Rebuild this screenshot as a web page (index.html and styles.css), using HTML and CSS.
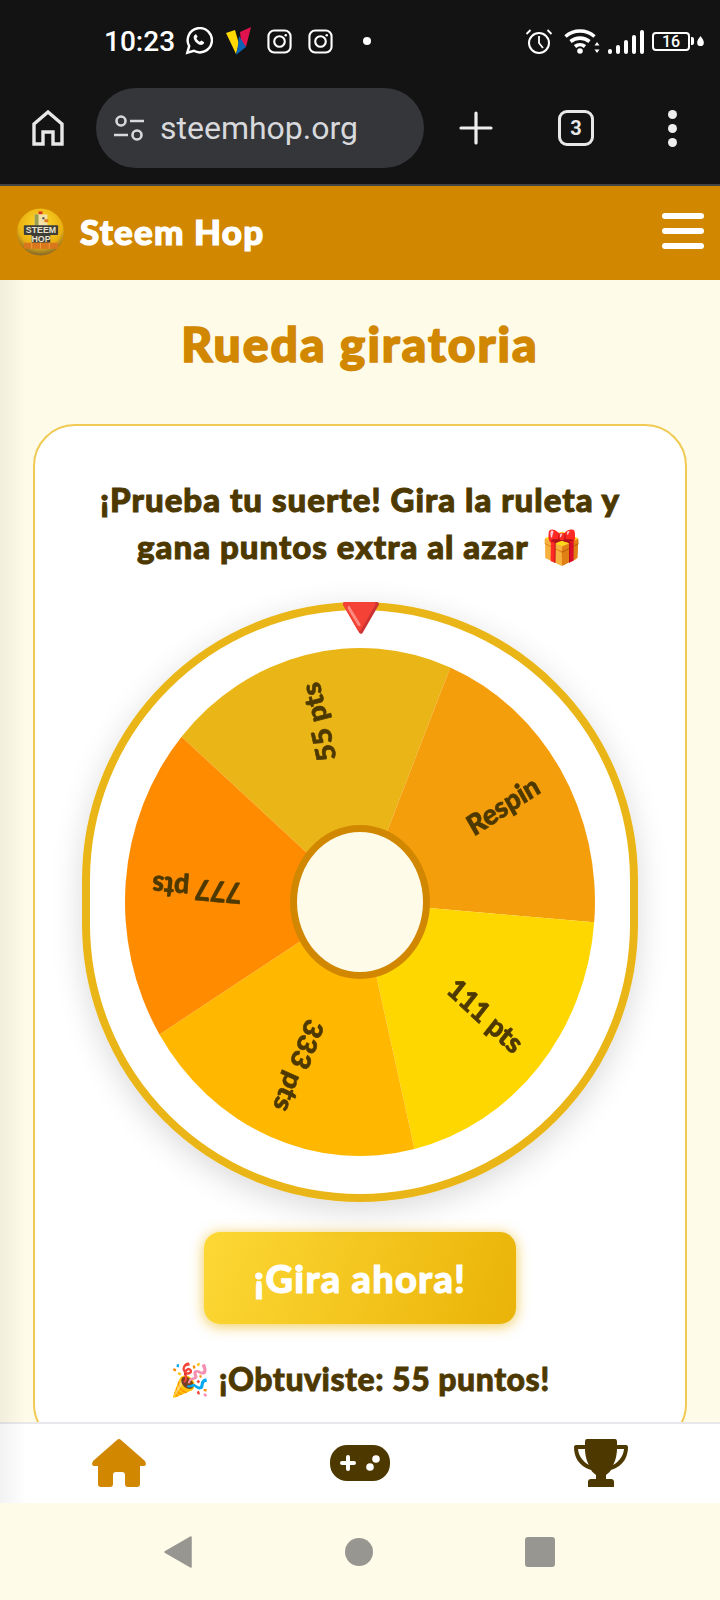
FILE: index.html
```html
<!DOCTYPE html>
<html lang="es">
<head>
    <meta charset="UTF-8">
    <title>Steem Hop</title>
    <link rel="stylesheet" href="styles.css">
</head>
<body>
    <div class="browser">
        <div class="status-bar">
            <span class="clock">10:23</span>
            <svg width="28" height="28" viewBox="0 0 30 30" fill="none" stroke="#fff" stroke-width="2.6"><path d="M2.500 27.500l2-7A13 13 0 1 1 9.500 25.500z"/><path d="M10.500 8.500c-2 1.500-1.500 5 1.500 8s6.500 3.500 8 1.500c.6-.8.6-1.600.2-2l-2.700-1.500-1.500 1.300c-1.800-.8-3-2-3.800-3.800l1.300-1.500-1.400-2.500c-.5-.4-1.200-.2-1.600.5z" fill="#fff" stroke="none"/></svg>
            <svg width="25" height="28" viewBox="0 0 25 28"><path d="M0 6l9-3 4 14-3 10z" fill="#ffd800"/><path d="M14 5l11-5-5 20-5-5z" fill="#e0134f"/><path d="M13 9l7 11-10 8 2-10z" fill="#0a63b5"/></svg>
            <svg class="insta" width="25" height="25" viewBox="0 0 26 26" fill="none" stroke="#fff" stroke-width="2.2"><rect x="1.500" y="1.500" width="23" height="23" rx="6"/><circle cx="13" cy="13" r="5.500"/><circle cx="19.500" cy="6.500" r="1.300" fill="#fff" stroke="none"/></svg>
            <svg class="insta" width="25" height="25" viewBox="0 0 26 26" fill="none" stroke="#fff" stroke-width="2.2"><rect x="1.500" y="1.500" width="23" height="23" rx="6"/><circle cx="13" cy="13" r="5.500"/><circle cx="19.500" cy="6.500" r="1.300" fill="#fff" stroke="none"/></svg>
            <span class="st-dot"></span>
            <div class="st-right">
                <svg class="alarm" width="28" height="26" viewBox="0 0 28 26" fill="none" stroke="#fff" stroke-width="2"><circle cx="14" cy="15" r="10"/><path d="M14 8v7l4 5M1.500 6l4-4M26.500 6l-4-4" stroke-width="1.800"/></svg>
                <svg width="36" height="26" viewBox="0 0 36 26" fill="none" stroke="#fff" stroke-width="3.600"><path d="M1.500 8.500a22 22 0 0 1 29 0M6.500 13.500a15 15 0 0 1 19 0M11 18.500a8 8 0 0 1 10 0"/><circle cx="16" cy="23" r="2.800" fill="#fff" stroke="none"/><path d="M33 14l2.500 3.500h-5zM33 25l2.500-3.500h-5z" fill="#fff" stroke="none"/></svg>
                <div class="bars"><i class="b1"></i><i class="b2"></i><i class="b3"></i><i class="b4"></i><i class="b5"></i></div>
                <div class="battery"><span>16</span></div>
                <span class="battery-tip"></span>
                <svg class="drop" width="7" height="10" viewBox="0 0 8 12"><path d="M4 0c2 3 4 5 4 8a4 4 0 0 1-8 0c0-3 2-5 4-8z" fill="#fff"/></svg>
            </div>
        </div>
        <div class="toolbar">
            <svg width="32" height="36" viewBox="0 0 32 36" fill="none" stroke="#e8e8e8" stroke-width="3.400"><path d="M2 34V14L16 2l14 12v20H21V22H11v12z"/></svg>
            <div class="address">
                <svg width="32" height="28" viewBox="0 0 32 28" fill="none" stroke="#d8d9dc" stroke-width="2.600"><circle cx="8" cy="7" r="4.500"/><path d="M17 7h14M1 21h14"/><circle cx="24" cy="21" r="4.500"/></svg>
                <span>steemhop.org</span>
            </div>
            <svg class="tb-plus" width="34" height="34" viewBox="0 0 34 34" stroke="#eee" stroke-width="3.200" stroke-linecap="round"><path d="M17 2v30M2 17h30"/></svg>
            <div class="tabs">3</div>
            <div class="dots"><i></i><i></i><i></i></div>
        </div>
    </div>

    <header class="site-header">
        <svg class="logo" width="47" height="48" viewBox="0 0 48 48">
            <defs>
                <radialGradient id="logoBg" cx="50%" cy="35%" r="65%">
                    <stop offset="0" stop-color="#ffdc2e"/>
                    <stop offset=".72" stop-color="#eab010"/>
                    <stop offset="1" stop-color="#80672a"/>
                </radialGradient>
            </defs>
            <circle cx="24" cy="24" r="24" fill="url(#logoBg)"/>
            <rect x="22" y="3" width="4" height="3" fill="#d8342a"/>
            <rect x="18" y="6" width="13" height="12" fill="#f2e2a8"/>
            <rect x="18" y="6" width="4" height="12" fill="#9aa050"/>
            <rect x="26" y="9" width="2" height="2" fill="#3f3d38"/>
            <rect x="28" y="11" width="4" height="3" fill="#e07b1a"/>
            <rect x="7" y="17" width="35" height="10" rx="1" fill="#3f3d38"/>
            <rect x="15" y="26" width="19" height="9" fill="#3f3d38"/>
            <text x="24.500" y="25.500" class="logo-text">STEEM</text>
            <text x="24.500" y="33.800" class="logo-text">HOP</text>
            <rect x="7" y="35" width="35" height="6" rx="1" fill="#d9771c"/>
            <path d="M15 35v6M24 35v6M33 35v6" stroke="#f0a040" stroke-width="1"/>
        </svg>
        <span class="brand">Steem Hop</span>
        <div class="burger"><i></i><i></i><i></i></div>
    </header>

    <main class="content">
        <h1>Rueda giratoria</h1>
        <section class="card">
            <p class="intro">¡Prueba tu suerte! Gira la ruleta y gana puntos extra al azar <span class="emoji gift">🎁</span></p>
            <div class="wheel-ring">
                <span class="pointer">🔻</span>
                <svg class="wheel" viewBox="0 0 300 300" preserveAspectRatio="none">
                    <path d="M150 150L36.100 52.400A150 150 0 0 1 207.600 11.500z" fill="#eab516"/>
                    <path d="M150 150L207.600 11.500A150 150 0 0 1 299.500 162z" fill="#f59e0b"/>
                    <path d="M150 150L299.500 162A150 150 0 0 1 184.800 295.900z" fill="#ffd700"/>
                    <path d="M150 150L184.800 295.900A150 150 0 0 1 22 228.200z" fill="#ffb700"/>
                    <path d="M150 150L22 228.200A150 150 0 0 1 36.100 52.400z" fill="#ff8c00"/>
                    <g class="labels">
                        <text transform="translate(150 150) rotate(-103.400)" x="133" y="5">55 pts</text>
                        <text transform="translate(150 150) rotate(-31.400)" x="133" y="5">Respin</text>
                        <text transform="translate(150 150) rotate(40.600)" x="133" y="5">111 pts</text>
                        <text transform="translate(150 150) rotate(112.600)" x="133" y="5">333 pts</text>
                        <text transform="translate(150 150) rotate(184.600)" x="133" y="5">777 pts</text>
                    </g>
                </svg>
                <div class="hub"></div>
            </div>
            <button class="spin">¡Gira ahora!</button>
            <p class="result"><span class="emoji">🎉</span> ¡Obtuviste: 55 puntos!</p>
        </section>
    </main>

    <nav class="bottom-nav">
        <svg width="54" height="48" viewBox="0 0 54 48" fill="#d18700"><path d="M25 1q2-2 4 0L53 22q2.500 5-2 5h-3v18q0 3-3 3H36q-3 0-3-3V36q0-3-3-3h-6q-3 0-3 3v9q0 3-3 3H9q-3 0-3-3V27H3q-4.500 0-2-5z"/></svg>
        <svg class="pad" width="60" height="36" viewBox="0 0 60 36"><rect width="60" height="36" rx="17" fill="#4d3900"/><path d="M18 12v12M12 18h12" stroke="#fff" stroke-width="4" stroke-linecap="round"/><circle cx="46" cy="14" r="3.800" fill="#fff"/><circle cx="40" cy="22" r="3.800" fill="#fff"/></svg>
        <svg width="54" height="48" viewBox="0 0 54 48" fill="#4d3900"><path d="M13 0h28q2 0 2 3v3h9q2 0 2 2c0 9-4 19-17 23-2 3-4 4-5 5v4h5q3 0 3 3v5H14v-5q0-3 3-3h5v-4c-1-1-3-2-5-5C4 27 0 17 0 8q0-2 2-2h9V3q0-3 2-3z"/><path d="M4 10h7c0 6 2 13 4 16C8 22 4.500 16 4 10zM43 10h7c-.5 6-4 12-11 16 2-3 4-10 4-16z" fill="#fff"/></svg>
    </nav>

    <div class="system-nav">
        <svg width="28" height="32" viewBox="0 0 28 32"><path d="M27 1v30L1 16z" fill="#979690" stroke="#979690" stroke-width="1.500" stroke-linejoin="round"/></svg>
        <span class="sys-home"></span>
        <span class="sys-square"></span>
    </div>

    <div class="edge-shade"></div>
</body>
</html>
```

FILE: styles.css
```css
* {
    box-sizing: border-box;
}

html,
body {
    margin: 0;
    height: 1600px;
}

body {
    position: relative;
    width: 720px;
    overflow: hidden;
    display: flex;
    flex-direction: column;
    font-family: "Lato", "Noto Sans", sans-serif;
    background-color: #fefbe8;
    color: #4d3900;
}

.emoji {
    -webkit-text-stroke: 0;
}

/* barra del navegador */
.browser {
    height: 186px;
    background-color: #131313;
    border-bottom: 2px solid #444;
    flex-shrink: 0;
}

.status-bar {
    height: 86px;
    padding: 0 16px 4px 104px;
    display: flex;
    align-items: center;
    gap: 13px;
    color: #fff;
}

.clock {
    margin-right: -3px;
    font-family: "Roboto", sans-serif;
    font-size: 28px;
    font-weight: 500;
}

.insta {
    margin-left: 3px;
}

.st-dot {
    width: 8px;
    height: 8px;
    border-radius: 50%;
    background-color: #fff;
    margin-left: 17px;
}

.st-right {
    margin-left: auto;
    display: flex;
    align-items: center;
    gap: 8px;
}

.alarm {
    margin-right: 3px;
}

.bars {
    display: flex;
    align-items: flex-end;
    gap: 4px;
    height: 25px;
}

.bars i {
    width: 4px;
    background-color: #fff;
    border-radius: 2px;
}

.b1 { height: 5px; }
.b2 { height: 9px; }
.b3 { height: 14px; }
.b4 { height: 19px; }
.b5 { height: 24px; }

.battery {
    width: 38px;
    height: 19px;
    border: 2px solid #fff;
    border-radius: 4px;
    font-family: "Roboto", sans-serif;
    font-size: 16px;
    font-weight: 500;
    line-height: 15px;
    text-align: center;
}

.battery-tip {
    width: 3px;
    height: 8px;
    margin-left: -7px;
    border-radius: 0 2px 2px 0;
    background-color: #fff;
}

.drop {
    margin-left: -5px;
}

.toolbar {
    height: 84px;
    padding: 0 32px;
    display: flex;
    align-items: center;
}

.address {
    width: 328px;
    height: 80px;
    margin-left: 32px;
    padding-left: 17px;
    border-radius: 40px;
    background-color: #353639;
    display: flex;
    align-items: center;
    gap: 15px;
    font-family: "Roboto", sans-serif;
    font-size: 32px;
    color: #d8d9dc;
}

.tb-plus {
    margin-left: 35px;
}

.tabs {
    width: 36px;
    height: 36px;
    margin-left: 65px;
    border: 3px solid #e8e8e8;
    border-radius: 9px;
    font-family: "Roboto", sans-serif;
    font-size: 20px;
    font-weight: 700;
    line-height: 30px;
    text-align: center;
    color: #e8e8e8;
}

.dots {
    margin-left: 74px;
    display: flex;
    flex-direction: column;
    gap: 5px;
}

.dots i {
    width: 9px;
    height: 9px;
    border-radius: 50%;
    background-color: #eee;
}

/* cabecera */
.site-header {
    height: 94px;
    flex-shrink: 0;
    padding: 0 16px 0 17px;
    background-color: #d18700;
    display: flex;
    align-items: center;
    gap: 16px;
}

.logo {
    margin-bottom: 2px;
}

.logo-text {
    font-family: "Liberation Sans", sans-serif;
    font-size: 9px;
    font-weight: 700;
    text-anchor: middle;
    fill: #e6e2cc;
}

.brand {
    margin-bottom: 5px;
    font-size: 35px;
    font-weight: 900;
    letter-spacing: 1.2px;
    -webkit-text-stroke: 1.2px #fff;
    color: #fff;
}

.burger {
    margin-left: auto;
    margin-bottom: 4px;
    display: flex;
    flex-direction: column;
    gap: 9px;
}

.burger i {
    width: 42px;
    height: 6px;
    border-radius: 3px;
    background-color: #fff;
}

/* contenido */
.content {
    flex: 1;
    min-height: 0;
    overflow: hidden;
    padding: 0 33px;
}

h1 {
    margin: 36px 0 52px;
    font-size: 48px;
    line-height: 56px;
    font-weight: 900;
    letter-spacing: 2px;
    text-align: center;
    -webkit-text-stroke: 1.6px #d18700;
    color: #d18700;
}

.card {
    height: 1022px;
    padding: 50px 40px 0;
    border: 2px solid #f0ca52;
    border-radius: 42px;
    background-color: #fff;
    display: flex;
    flex-direction: column;
    align-items: center;
}

.intro {
    margin: 0;
    font-size: 33px;
    line-height: 47px;
    font-weight: 900;
    letter-spacing: 1px;
    text-align: center;
    -webkit-text-stroke: 1px #4d3900;
}

.gift {
    margin-left: 4px;
}

.wheel-ring {
    position: relative;
    width: 556px;
    height: 600px;
    margin-top: 32px;
    flex-shrink: 0;
    border: 8px solid #eab516;
    border-radius: 278px;
    box-shadow: 0 8px 32px rgba(0, 0, 0, 0.15);
    display: flex;
    align-items: center;
    justify-content: center;
}

.pointer {
    position: absolute;
    top: -30px;
    left: 50%;
    transform: translateX(-50%);
    font-size: 62px;
    line-height: 70px;
}

.wheel {
    width: 470px;
    height: 508px;
    filter: blur(0.6px);
}

.labels text {
    font-size: 17px;
    font-weight: 900;
    text-anchor: end;
    fill: #4d3900;
    stroke: #4d3900;
    stroke-width: 0.4px;
}

.hub {
    position: absolute;
    top: 50%;
    left: 50%;
    width: 140px;
    height: 154px;
    transform: translate(-50%, -50%);
    border: 7px solid #d18700;
    border-radius: 50%;
    background-color: #fefbe8;
}

.spin {
    width: 312px;
    height: 92px;
    margin-top: 30px;
    flex-shrink: 0;
    border: none;
    border-radius: 16px;
    background: linear-gradient(110deg, #fdd835, #eab308);
    box-shadow: 0 2px 14px rgba(234, 179, 8, 0.7);
    font-family: inherit;
    font-size: 38px;
    font-weight: 900;
    letter-spacing: 1.2px;
    -webkit-text-stroke: 1px #fff;
    color: #fff;
}

.result {
    margin: 35px 0 0;
    font-size: 32px;
    font-weight: 900;
    letter-spacing: 0.5px;
    -webkit-text-stroke: 0.8px #4d3900;
}

/* navegacion inferior */
.bottom-nav {
    height: 81px;
    flex-shrink: 0;
    border-top: 2px solid #e8e8ec;
    padding: 15px 92px 0;
    background-color: #fff;
    display: flex;
    justify-content: space-between;
    align-items: flex-start;
}

.pad {
    margin-top: 6px;
}

.system-nav {
    height: 97px;
    flex-shrink: 0;
    padding: 0 165px 0 164px;
    background-color: #fefbe8;
    display: flex;
    align-items: center;
    justify-content: space-between;
}

.sys-home {
    width: 28px;
    height: 28px;
    border-radius: 50%;
    background-color: #979690;
}

.sys-square {
    width: 30px;
    height: 30px;
    border-radius: 3px;
    background-color: #979690;
}

/* sombra del borde izquierdo al hacer scroll */
.edge-shade {
    position: absolute;
    top: 280px;
    left: 0;
    width: 26px;
    height: 1223px;
    background: linear-gradient(to right, rgba(0, 0, 0, 0.05), rgba(0, 0, 0, 0));
}
```
